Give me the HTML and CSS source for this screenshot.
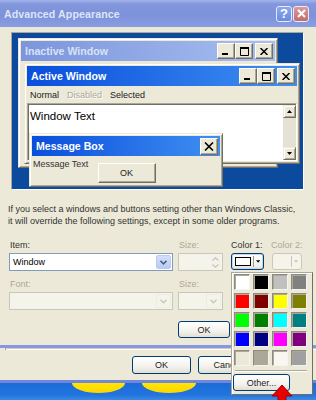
FILE: index.html
```html
<!DOCTYPE html>
<html>
<head>
<meta charset="utf-8">
<title>Advanced Appearance</title>
<link rel="stylesheet" href="styles.css">
</head>
<body>
<div class="screen">
  <div class="adv">
    <div class="adv-title">
      <span class="adv-title-text">Advanced Appearance</span>
      <div class="xp-caps">
        <span class="xp-cap help">?</span>
        <span class="xp-cap close"><svg width="9" height="9" viewBox="0 0 9 9"><path d="M1 1L8 8M8 1L1 8" stroke="#fff" stroke-width="2"/></svg></span>
      </div>
    </div>
    <div class="adv-body">
      <div class="preview">
        <div class="win inactive">
          <div class="titlebar">
            <span>Inactive Window</span>
            <div class="cbtns">
              <span class="cbtn"><svg width="8" height="8" viewBox="0 0 8 8"><rect x="0" y="6" width="6" height="2" fill="#000"/></svg></span>
              <span class="cbtn"><svg width="9" height="9" viewBox="0 0 9 9"><path d="M0.5 0.5H8.5V8.5H0.5Z" fill="none" stroke="#000"/><rect x="0" y="0" width="9" height="2" fill="#000"/></svg></span>
              <span class="cbtn gap"><svg width="8" height="7" viewBox="0 0 8 7"><path d="M0.5 0L7.5 7M7.5 0L0.5 7" stroke="#000" stroke-width="1.5"/></svg></span>
            </div>
          </div>
        </div>
        <div class="win active">
          <div class="titlebar">
            <span>Active Window</span>
            <div class="cbtns">
              <span class="cbtn"><svg width="8" height="8" viewBox="0 0 8 8"><rect x="0" y="6" width="6" height="2" fill="#000"/></svg></span>
              <span class="cbtn"><svg width="9" height="9" viewBox="0 0 9 9"><path d="M0.5 0.5H8.5V8.5H0.5Z" fill="none" stroke="#000"/><rect x="0" y="0" width="9" height="2" fill="#000"/></svg></span>
              <span class="cbtn gap"><svg width="8" height="7" viewBox="0 0 8 7"><path d="M0.5 0L7.5 7M7.5 0L0.5 7" stroke="#000" stroke-width="1.5"/></svg></span>
            </div>
          </div>
          <div class="menu">
            <span>Normal</span>
            <span class="dis">Disabled</span>
            <span>Selected</span>
          </div>
          <div class="client">
            <div class="client-text">Window Text</div>
            <div class="vscroll">
              <span class="sbtn"><svg width="5" height="3" viewBox="0 0 5 3"><path d="M2.5 0L5 3H0Z" fill="#000"/></svg></span>
              <span class="track"></span>
              <span class="sbtn"><svg width="5" height="3" viewBox="0 0 5 3"><path d="M0 0H5L2.5 3Z" fill="#000"/></svg></span>
            </div>
          </div>
        </div>
        <div class="win msgbox">
          <div class="titlebar">
            <span>Message Box</span>
            <div class="cbtns">
              <span class="cbtn big"><svg width="10" height="9" viewBox="0 0 10 9"><path d="M1 0.5L9 8.5M9 0.5L1 8.5" stroke="#000" stroke-width="1.6"/></svg></span>
            </div>
          </div>
          <div class="msg-body">
            <span class="msg-text">Message Text</span>
            <span class="cl-btn">OK</span>
          </div>
        </div>
      </div>

      <p class="note">If you select a windows and buttons setting other than Windows Classic,<br>it will override the following settings, except in some older programs.</p>

      <div class="form">
        <div class="frow">
          <div class="field f-item">
            <label>Item:</label>
            <div class="combo">
              <span class="combo-val">Window</span>
              <span class="ddbtn"><svg width="7" height="5" viewBox="0 0 7 5"><path d="M0.5 0.8L3.5 3.8L6.5 0.8" fill="none" stroke="#4d6185" stroke-width="1.6"/></svg></span>
            </div>
          </div>
          <div class="field f-size">
            <label class="dim">Size:</label>
            <div class="combo disabled">
              <span class="spin"><svg width="7" height="4" viewBox="0 0 7 4"><path d="M0.5 3.5L3.5 0.8L6.5 3.5" fill="none" stroke="#c9c7ba" stroke-width="1.3"/></svg><svg width="7" height="4" viewBox="0 0 7 4"><path d="M0.5 0.5L3.5 3.2L6.5 0.5" fill="none" stroke="#c9c7ba" stroke-width="1.3"/></svg></span>
            </div>
          </div>
          <div class="field f-c1">
            <label>Color 1:</label>
            <div class="colbtn">
              <span class="colsw"></span>
              <span class="colsep"></span>
              <svg width="5" height="3" viewBox="0 0 5 3"><path d="M0 0H5L2.5 3Z" fill="#000"/></svg>
            </div>
          </div>
          <div class="field f-c2">
            <label class="dim">Color 2:</label>
            <div class="colbtn disabled">
              <span class="colsw empty"></span>
              <span class="colsep"></span>
              <svg width="5" height="3" viewBox="0 0 5 3"><path d="M0 0H5L2.5 3Z" fill="#c9c7ba"/></svg>
            </div>
          </div>
        </div>
        <div class="frow r2">
          <div class="field f-item">
            <label class="dim">Font:</label>
            <div class="combo disabled">
              <span class="combo-val"></span>
              <span class="ddbtn off"><svg width="7" height="5" viewBox="0 0 7 5"><path d="M0.5 0.8L3.5 3.8L6.5 0.8" fill="none" stroke="#c9c7ba" stroke-width="1.4"/></svg></span>
            </div>
          </div>
          <div class="field f-size">
            <label class="dim">Size:</label>
            <div class="combo disabled">
              <span class="combo-val"></span>
              <span class="ddbtn off"><svg width="7" height="5" viewBox="0 0 7 5"><path d="M0.5 0.8L3.5 3.8L6.5 0.8" fill="none" stroke="#c9c7ba" stroke-width="1.4"/></svg></span>
            </div>
          </div>
        </div>
      </div>

      <div class="actions">
        <span class="xpbtn">OK</span>
        <span class="xpbtn">Cancel</span>
      </div>
    </div>
  </div>

  <div class="under">
    <div class="pane-edge"></div>
    <div class="under-actions">
      <span class="xpbtn wide">OK</span>
      <span class="xpbtn wide">Cancel</span>
    </div>
  </div>

  <div class="desk">
    <span class="blob b1"></span>
    <span class="blob b2"></span>
  </div>

  <div class="popup">
    <div class="swatches">
      <span class="sw" style="background:#ffffff"></span>
      <span class="sw" style="background:#000000"></span>
      <span class="sw" style="background:#c0c0c0"></span>
      <span class="sw" style="background:#808080"></span>
      <span class="sw" style="background:#ff0000"></span>
      <span class="sw" style="background:#800000"></span>
      <span class="sw" style="background:#ffff00"></span>
      <span class="sw" style="background:#808000"></span>
      <span class="sw" style="background:#00ff00"></span>
      <span class="sw" style="background:#008000"></span>
      <span class="sw" style="background:#00ffff"></span>
      <span class="sw" style="background:#008080"></span>
      <span class="sw" style="background:#0000ff"></span>
      <span class="sw" style="background:#000080"></span>
      <span class="sw" style="background:#ff00ff"></span>
      <span class="sw" style="background:#800080"></span>
      <span class="sw" style="background:#ece9d8"></span>
      <span class="sw" style="background:#aca899"></span>
      <span class="sw" style="background:#f8f7f2"></span>
      <span class="sw" style="background:#a0a0a0"></span>
    </div>
    <div class="psep"></div>
    <span class="xpbtn other">Other...</span>
  </div>

  <svg class="redarrow" width="24" height="17" viewBox="0 0 24 17"><path d="M12 1L2 12H8V17H16V12H22Z" fill="#e80000" stroke="#a00000" stroke-width="1"/></svg>
</div>
</body>
</html>
```

FILE: styles.css
```css
* { box-sizing: border-box; }
html, body { margin: 0; padding: 0; }
body {
  width: 316px;
  height: 400px;
  overflow: hidden;
  background: #ece9d8;
  font-family: "Liberation Sans", Arial, sans-serif;
  color: #000;
}
.screen { position: relative; width: 316px; height: 400px; overflow: hidden; }

/* main dialog */
.adv {
  height: 348px;
  display: flex;
  flex-direction: column;
  background: #ece9d8;
  border-bottom: 3px solid #8797df;
}
.adv-title {
  flex: none;
  height: 27px;
  display: flex;
  align-items: center;
  padding: 0 7px 0 4px;
  background: linear-gradient(to bottom, #a3b4ec 0, #8396dc 4px, #7d92da 60%, #8a9ee2 100%);
}
.adv-title-text {
  font-weight: bold;
  font-size: 10.6px;
  color: #dde5f7;
  letter-spacing: 0.1px;
}
.xp-caps { margin-left: auto; display: flex; gap: 1px; }
.xp-cap {
  width: 16px;
  height: 16px;
  border: 1px solid #e6ebf8;
  border-radius: 3px;
  display: flex;
  align-items: center;
  justify-content: center;
  color: #fff;
  font-weight: bold;
  font-size: 13px;
}
.xp-cap.help { background: linear-gradient(to bottom, #8aa6ee, #6b8be2); }
.xp-cap.close { background: linear-gradient(to bottom, #d99c9e, #c36a6c); }

.adv-body { flex: 1; display: flex; flex-direction: column; }

/* preview */
.preview {
  position: relative;
  margin: 5px 0 0 11px;
  width: 293px;
  height: 158px;
  flex: none;
  background: #0b4a9c;
  border: 1px solid;
  border-color: #aca899 #ffffff #ffffff #aca899;
}
.win {
  position: absolute;
  background: #ece9d8;
  border: 1px solid;
  border-color: #ece9d8 #716f64 #716f64 #ece9d8;
  box-shadow: inset 1px 1px #ffffff, inset -1px -1px #aca899;
  padding: 2px;
  display: flex;
  flex-direction: column;
}
.inactive { left: 6px; top: 5px; width: 260px; height: 130px; }
.active { left: 12px; top: 30px; width: 276px; height: 101px; }
.msgbox { left: 17px; top: 100px; width: 194px; height: 54px; }

.titlebar {
  flex: none;
  height: 20px;
  display: flex;
  align-items: center;
  padding: 0 2px 0 4px;
  font-weight: bold;
  font-size: 10.6px;
  white-space: nowrap;
}
.inactive .titlebar { background: linear-gradient(to right, #7c95dc, #a7bff0); color: #d8e2f7; }
.active .titlebar, .msgbox .titlebar { background: linear-gradient(to right, #0a4edc, #3f90f2); color: #fff; }
.cbtns { margin-left: auto; display: flex; }
.cbtn {
  width: 18px;
  height: 16px;
  background: #ece9d8;
  border: 1px solid;
  border-color: #ffffff #716f64 #716f64 #ffffff;
  box-shadow: inset -1px -1px #aca899;
  display: flex;
  align-items: center;
  justify-content: center;
}
.cbtn.gap { margin-left: 2px; }
.cbtn.big { width: 18px; height: 17px; }

.menu {
  flex: none;
  height: 17px;
  display: flex;
  align-items: center;
  gap: 8px;
  padding-left: 3px;
  font-size: 9px;
  color: #222;
}
.menu .dis { color: #aca899; text-shadow: 1px 1px #fff; }

.client {
  flex: 1;
  display: flex;
  background: #fff;
  border: 1px solid;
  border-color: #aca899 #ffffff #ffffff #aca899;
  box-shadow: inset 1px 1px #716f64;
  padding: 1px 0 0 1px;
}
.client-text { flex: 1; font-size: 11.5px; padding: 4px 0 0 1px; line-height: 14px; }
.vscroll { width: 13px; display: flex; flex-direction: column; background: #e4e1d5; }
.sbtn {
  flex: none;
  height: 13px;
  background: #ece9d8;
  border: 1px solid;
  border-color: #ece9d8 #716f64 #716f64 #ece9d8;
  box-shadow: inset 1px 1px #fff, inset -1px -1px #aca899;
  display: flex;
  align-items: center;
  justify-content: center;
}
.track { flex: 1; }

.msg-body {
  flex: 1;
  display: grid;
  padding: 2px 0 0 1px;
}
.msg-text, .msg-body .cl-btn { grid-area: 1 / 1; }
.msg-text { font-size: 9px; color: #333; line-height: 12px; justify-self: start; }
.cl-btn {
  justify-self: center;
  margin-top: 5px;
  width: 58px;
  height: 20px;
  background: #ece9d8;
  border: 1px solid;
  border-color: #ffffff #716f64 #716f64 #ffffff;
  box-shadow: inset -1px -1px #aca899;
  display: flex;
  align-items: center;
  justify-content: center;
  font-size: 9px;
  color: #222;
}

/* note */
.note {
  margin: 13px 0 0 8px;
  font-size: 9px;
  line-height: 12px;
  color: #333;
  white-space: nowrap;
}

/* form */
.form { margin: 12px 0 0 9px; display: flex; flex-direction: column; gap: 7px; }
.frow { display: flex; }
.field { display: flex; flex-direction: column; }
.field label { font-size: 9px; line-height: 13px; height: 14px; padding-left: 1px; color: #333; white-space: nowrap; }
.field label.dim { color: #aca899; }
.f-item { width: 164px; }
.f-size { width: 45px; margin-left: 5px; }
.f-c1 { width: 33px; margin-left: 8px; }
.f-c1 label { margin-left: -1px; }
.f-c2 { width: 30px; margin-left: 8px; }
.f-c2 label { margin-left: -2px; }

.combo {
  height: 18px;
  display: flex;
  align-items: stretch;
  background: #fff;
  border: 1px solid #7f9db9;
  padding: 1px;
}
.combo.disabled { background: #f5f4ea; border-color: #c9c7ba; }
.combo-val { flex: 1; font-size: 9px; line-height: 14px; padding-left: 2px; }
.ddbtn {
  width: 15px;
  border-radius: 2px;
  background: linear-gradient(to bottom, #d3dffc, #b8cbf6);
  border: 1px solid #bccbf1;
  display: flex;
  align-items: center;
  justify-content: center;
}
.ddbtn.off { background: #f5f4ea; border-color: #eeede3; }
.spin { margin-left: auto; width: 11px; display: flex; flex-direction: column; align-items: center; justify-content: space-around; background: #f3f2ea; }

.colbtn {
  height: 17px;
  display: flex;
  align-items: center;
  padding: 0 3px 0 3px;
  border: 1px solid #003c74;
  border-radius: 3px;
  background: linear-gradient(to bottom, #ffffff, #f0efea 80%, #dcd8cc);
  box-shadow: inset 0 0 0 1px #c5d4f2;
}
.colbtn.disabled { border-color: #cac8bb; background: #f5f4ea; box-shadow: none; }
.colsw { width: 18px; height: 9px; border: 1px solid #000; background: #fff; }
.colsw.empty { width: 16px; border: none; background: transparent; }
.colsep { width: 1px; height: 11px; background: #9d9a8c; margin: 0 2px 0 2px; }
.colbtn.disabled .colsep { background: #cac8bb; }

.actions { margin: 11px 0 0 178px; display: flex; gap: 7px; }
.xpbtn {
  width: 52px;
  height: 17px;
  border: 1px solid #003c74;
  border-radius: 3px;
  background: linear-gradient(to bottom, #ffffff, #f3f2ed 60%, #e2ded3);
  display: flex;
  align-items: center;
  justify-content: center;
  font-size: 9px;
  color: #222;
}

/* dialog underneath */
.under {
  height: 35px;
  background: #ece9d8;
  border-bottom: 3px solid #7286dc;
  display: flex;
  flex-direction: column;
}
.pane-edge {
  margin-left: 5px;
  height: 2px;
  border-left: 1px solid #919b9c;
  border-top: 1px solid #d0cdbf;
  box-shadow: inset 0 1px #fff;
}
.under-actions { margin: 6px 0 0 132px; display: flex; gap: 7px; }
.xpbtn.wide { width: 59px; height: 18px; }

/* desktop strip */
.desk {
  height: 17px;
  display: flex;
  background: linear-gradient(to bottom, #1b6bd8, #2274de 70%, #3a8ae6);
}
.blob {
  height: 10px;
  border-radius: 0 0 50% 50% / 0 0 100% 100%;
  background: linear-gradient(to bottom, #ffe600, #ffd400);
}
.b1 { width: 53px; margin-left: 72px; }
.b2 { width: 54px; margin-left: 17px; }

/* color popup */
.popup {
  position: absolute;
  left: 231px;
  top: 272px;
  width: 82px;
  height: 123px;
  background: #ece9d8;
  border: 1px solid;
  border-color: #aca899 #716f64 #716f64 #aca899;
  box-shadow: inset 1px 1px #fff;
  padding: 1px 0 0 1px;
  display: flex;
  flex-direction: column;
}
.swatches {
  display: grid;
  grid-template-columns: repeat(4, 16px);
  grid-auto-rows: 16px;
  column-gap: 3px;
  row-gap: 3px;
  padding-left: 1px;
}
.sw {
  border: 1px solid;
  border-color: #8e8b7e #f4f3ee #f4f3ee #8e8b7e;
  box-shadow: inset 1px 1px #aca899;
}
.psep { margin: 4px 5px 0 2px; height: 2px; border-top: 1px solid #aca899; border-bottom: 1px solid #fff; }
.xpbtn.other { margin: 2px 0 0 0; width: 57px; height: 17px; }

.redarrow { position: absolute; left: 270px; top: 384px; }
```
